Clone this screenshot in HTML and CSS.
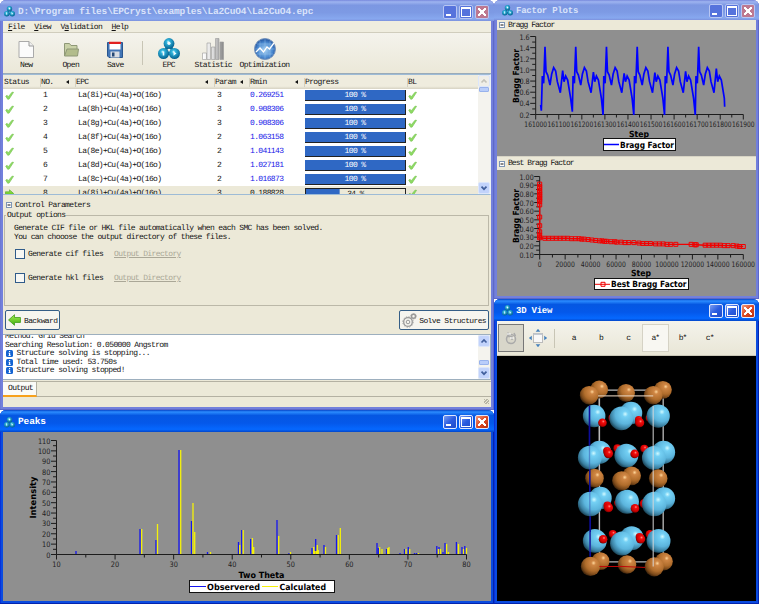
FILE: index.html
```
<!DOCTYPE html>
<html lang="en">
<head>
<meta charset="utf-8">
<title>EPCryst</title>
<link rel="stylesheet" href="styles.css">
</head>
<body>
<svg class="defs" aria-hidden="true">
  <defs>
    <radialGradient id="ball" cx=".42" cy=".35" r=".65"><stop offset="0" stop-color="#d8f8ff"/><stop offset=".25" stop-color="#31b4dc"/><stop offset="1" stop-color="#04618f"/></radialGradient>
    <radialGradient id="gLa" cx=".66" cy=".32" r=".75"><stop offset="0" stop-color="#d2faff"/><stop offset=".16" stop-color="#74d0f4"/><stop offset=".55" stop-color="#5cb5dd"/><stop offset=".8" stop-color="#3b81a2"/><stop offset="1" stop-color="#163b4b"/></radialGradient>
    <radialGradient id="gCu" cx=".66" cy=".32" r=".75"><stop offset="0" stop-color="#ffd69a"/><stop offset=".16" stop-color="#cf8644"/><stop offset=".55" stop-color="#b06d2c"/><stop offset=".8" stop-color="#7b491a"/><stop offset="1" stop-color="#2e1a07"/></radialGradient>
    <radialGradient id="gO" cx=".6" cy=".35" r=".7"><stop offset="0" stop-color="#ff8a80"/><stop offset=".25" stop-color="#f20c0c"/><stop offset=".7" stop-color="#c80000"/><stop offset="1" stop-color="#5a0000"/></radialGradient>
    <radialGradient id="globe" cx=".5" cy=".55" r=".55"><stop offset="0" stop-color="#a8d2f4"/><stop offset=".65" stop-color="#4b8ad0"/><stop offset="1" stop-color="#1d4f9c"/></radialGradient>
    <linearGradient id="metal"><stop offset="0" stop-color="#fff"/><stop offset=".5" stop-color="#ddd"/><stop offset="1" stop-color="#888"/></linearGradient>
    <linearGradient id="green" x2="0" y2="1"><stop offset="0" stop-color="#a5ee52"/><stop offset="1" stop-color="#3fae0c"/></linearGradient>
    <symbol id="epc" viewBox="0 0 22 22"><path d="M11 6 5.500 15.500H16.500Z" stroke="#0b6f98" stroke-width="3" fill="none"/><circle cx="11" cy="5.500" r="5.400" fill="url(#ball)"/><circle cx="5.500" cy="15.500" r="5.500" fill="url(#ball)"/><circle cx="16.500" cy="15.500" r="5.500" fill="url(#ball)"/><circle cx="11" cy="5.300" r="1.600" fill="#effcff"/><path d="M4.700 13.500h1.600v4h-1.600zM15.500 13.300l3 2.200-3 2.200z" fill="#effcff"/></symbol>
    <symbol id="tick" viewBox="0 0 10 10"><path d="M.8 5.800 2.300 4.800 3.700 6.300 7.800 1.300 9.500 1.500 4.600 9 3 9.200Z" fill="#8ddb62" stroke="#74c24c" stroke-width=".7"/></symbol>
    <symbol id="arrow" viewBox="0 0 12 11"><path d="M.5 5.500 6 .6V3.200H11.500V7.800H6V10.400Z" fill="url(#green)" stroke="#3b9815" stroke-width=".7"/></symbol>
    <symbol id="info" viewBox="0 0 7 7"><rect width="7" height="7" rx="1.500" fill="#1464d2"/><path d="M3 1h1.200v1H3zM2.500 2.800h1.700v2.400h.6v.7H2.500v-.7H3V3.500h-.5z" fill="#fff"/></symbol>
    <symbol id="up" viewBox="0 0 10 10"><path d="M2.500 6.500 5 4 7.500 6.500" fill="none" stroke="currentColor" stroke-width="1.700"/></symbol>
    <symbol id="down" viewBox="0 0 10 10"><path d="M2.500 3.700 5 6.200 7.500 3.700" fill="none" stroke="currentColor" stroke-width="1.700"/></symbol>
    <symbol id="minus" viewBox="0 0 6 6"><rect x=".5" y=".5" width="5" height="5" fill="#fff" stroke="#7d95b5"/><path d="M1.500 3h3" stroke="#111"/></symbol>
  </defs>
</svg>
<div class="desktop">
  <div class="left">
    <section class="win main inactive">
      <header class="title"><svg class="logo"><use href="#epc"/></svg><h1>D:\Program files\EPCryst\examples\La2CuO4\La2CuO4.epc</h1><span class="ctl min"></span><span class="ctl max"></span><span class="ctl close"></span></header>
      <div class="body">
        <nav class="menu"><span><u>F</u>ile</span><span><u>V</u>iew</span><span>V<u>a</u>lidation</span><span><u>H</u>elp</span></nav>
        <div class="toolbar">
          <div class="tool"><svg viewBox="0 0 22 22"><path d="M4 3.500H14L18.500 8V19.500H4Z" fill="#fbfbfb" stroke="#aaa"/><path d="M14 3.500V8H18.500" fill="#eee" stroke="#999"/></svg><span>New</span></div>
          <div class="tool"><svg viewBox="0 0 22 22"><path d="M4.500 18V5.500H9.500L11 7.500H17V11" fill="#c9d1a7" stroke="#8f9877"/><path d="M4.500 18 7 11H18.500L17.500 18Z" fill="#b2bc8c" stroke="#8f9877"/></svg><span>Open</span></div>
          <div class="tool"><svg viewBox="0 0 22 22"><path d="M3.500 4.500H18.500V19.500H5L3.500 18Z" fill="#4275b5" stroke="#29568f"/><path d="M5.500 4.500H16.500V11.500H5.500Z" fill="#fff"/><path d="M5 3.700H17V6H5Z" fill="#e22020"/><path d="M6.500 13.500H15.500V19.500H6.500Z" fill="#d8dde3"/><path d="M8 14.500H10.500V18.500H8Z" fill="#244874"/></svg><span>Save</span></div>
          <i class="sep"></i>
          <div class="tool"><svg><use href="#epc"/></svg><span>EPC</span></div>
          <div class="tool"><svg viewBox="0 0 22 22"><g fill="url(#metal)" stroke="#999" stroke-width=".6"><path d="M.5 15h4v6.500H.5zM5 5h3.500v16.500H5zM9.500 9h3.500v12.500H9.500zM13.500.500h3.500v21h-3.500zM18 4h3.500v17.500H18z"/></g></svg><span>Statistic</span></div>
          <div class="tool wide"><svg viewBox="0 0 22 22"><circle cx="11" cy="11" r="10.500" fill="url(#globe)" stroke="#7a97bd"/><path d="M11 1v20M1 11h20M6 2.500v17M16 2.500v17M3 6h16M3 16h16" stroke="#a2caee" stroke-width=".4"/><path d="M2 14 6 10 9.500 14 13 9 15.500 11 20 5" stroke="#fff" stroke-width="1.300" fill="none"/></svg><span>Optimization</span></div>
        </div>
        <div class="list">
          <div class="rows">
            <div class="row head"><span>Status</span><span>NO.<b></b></span><span>EPC<b></b></span><span>Param<b></b></span><span>Rmin<b></b></span><span>Progress</span><span>BL</span></div>
            <div id="rows"></div>
          </div>
          <div class="scroll"><span class="sb off"><svg><use href="#up"/></svg></span><span class="thumb"></span><span class="sb end"><svg><use href="#down"/></svg></span></div>
        </div>
        <div class="section"><svg><use href="#minus"/></svg>Control Parameters</div>
        <fieldset>
          <legend>Output options</legend>
          <p>Generate CIF file or HKL file automatically when each SMC has been solved.<br>You can chooose the output directory of these files.</p>
          <div class="check"><i></i><span>Generate cif files</span><a>Output Directory</a></div>
          <div class="check"><i></i><span>Generate hkl files</span><a>Output Directory</a></div>
        </fieldset>
        <div class="actions">
          <button><svg viewBox="0 0 12 11"><use href="#arrow"/></svg>Backward</button>
          <button><svg class="gear" viewBox="0 0 15 15"><g fill="none" stroke="#999"><circle cx="6" cy="9" r="4.300" stroke-width="1.300"/><circle cx="6" cy="9" r="5.200" stroke-dasharray="1.400 1.300" stroke-width=".9"/><circle cx="6" cy="9" r="1.800"/><circle cx="11.500" cy="3.300" r="2" stroke-width="1.500"/><circle cx="11.500" cy="3.300" r="2.900" stroke-dasharray="1 .8" stroke-width=".7"/></g></svg>Solve Structures</button>
        </div>
        <div class="log">
          <div class="lines"><div>Method: Grid Search</div><div>Searching Resolution: 0.050000 Angstrom</div><div><svg><use href="#info"/></svg>Structure solving is stopping...</div><div><svg><use href="#info"/></svg>Total time used: 53.750s</div><div><svg><use href="#info"/></svg>Structure solving stopped!</div></div>
          <div class="scroll"><span class="sb"><svg><use href="#up"/></svg></span><span class="thumb low"></span><span class="sb"><svg><use href="#down"/></svg></span></div>
        </div>
        <div class="tabs"><span>Output</span></div>
        <div class="status"><i></i></div>
      </div>
    </section>
    <section class="win peaks">
      <header class="title"><svg class="logo"><use href="#epc"/></svg><h1>Peaks</h1><span class="ctl min"></span><span class="ctl max"></span><span class="ctl close"></span></header>
      <div class="body"><svg id="peaks" class="plot" viewBox="3 432 488 169"></svg></div>
    </section>
  </div>
  <div class="right">
    <section class="win factor inactive">
      <header class="title"><svg class="logo"><use href="#epc"/></svg><h1>Factor Plots</h1><span class="ctl min"></span><span class="ctl max"></span><span class="ctl close"></span></header>
      <div class="body">
        <div class="bar"><svg><use href="#minus"/></svg>Bragg Factor</div>
        <svg id="bragg" class="plot" viewBox="497 30 259 126"></svg>
        <div class="bar second"><svg><use href="#minus"/></svg>Best Bragg Factor</div>
        <svg id="best" class="plot" viewBox="497 170 259 126"></svg>
      </div>
    </section>
    <section class="win view">
      <header class="title"><svg class="logo"><use href="#epc"/></svg><h1>3D View</h1><span class="ctl min"></span><span class="ctl max"></span><span class="ctl close"></span></header>
      <div class="body">
        <div class="vbar">
          <span class="pressed"><svg viewBox="0 0 14 14"><g fill="none" stroke="#aaa" stroke-width="1.500"><circle cx="7" cy="8" r="4.500"/><path d="M4 1.500V5.500H8V9M10 2 11.500 5"/></g><path d="M3 3h4M6 7h4" stroke="#fff"/></svg></span>
          <span class="fit"><svg viewBox="0 0 20 20"><rect x="5.500" y="5.500" width="9" height="9" fill="#f8f8f8" stroke="#bbb"/><path d="M5.500 5.500h9v1.500h-9z" fill="#c3cbd4"/><path d="M10 .8 12.300 3.800H7.700ZM10 19.200 7.700 16.200H12.300ZM.8 10 3.800 7.700V12.300ZM19.200 10 16.200 12.300V7.700Z" fill="#4682bd"/></svg></span>
          <i class="sep"></i>
          <span>a</span><span>b</span><span>c</span><span class="hot">a*</span><span>b*</span><span>c*</span>
        </div>
        <svg id="crystal" class="plot" viewBox="497 355 259 246"></svg>
      </div>
    </section>
  </div>
</div>
<script src="app.js"></script>
</body>
</html>
```
FILE: styles.css
```
* { box-sizing: border-box; }
body { margin: 0; background: #fff; color: #111; font: 8px/9px "Liberation Mono", monospace; letter-spacing: -.63px; text-rendering: geometricPrecision; overflow: hidden; white-space: nowrap; }
svg { display: block; flex: none; }
.defs { position: absolute; width: 0; height: 0; }
.desktop { display: grid; grid-template-columns: 494px 265px; width: 759px; height: 604px; }
.left { display: grid; grid-template-rows: 410px 194px; }
.right { display: grid; grid-template-rows: 299px 305px; }
.win { display: flex; flex-direction: column; padding: 0 3px 3px; background: #0a4be0; border-radius: 6px 6px 0 0; box-shadow: inset -1px -1px #0424ad, inset 1px 0 #0831d9; min-height: 0; overflow: hidden; }
.inactive { background: #7280dc; box-shadow: inset -1px -1px #5d68c8, inset 1px 0 #6d79d4; }
.title { display: flex; align-items: center; gap: 3px; flex: none; height: 22px; margin: 0 -3px; padding: 2px 5px 0 4px; background: linear-gradient(#0645c8, #2b8cff 9%, #0557e2 25%, #0458ea 60%, #0568ff 88%, #0346c9); color: #fff; }
.inactive .title { height: 21px; background: linear-gradient(#7788dc, #9eb4f0 9%, #7c97e2 25%, #7d9ae4 60%, #87a8ef 90%, #7c91dd); color: #d9e3fa; }
.title h1 { flex: 1; margin: 0; font-size: 9.500px; line-height: 12px; letter-spacing: -.13px; font-weight: bold; }
.logo { width: 11px; height: 11px; }
.ctl { width: 14px; height: 14px; border: 1px solid #dfe8ff; border-radius: 2px; background: linear-gradient(135deg, #7b9cf0, #2a5ce0 50%, #1f4bc8); display: grid; margin-left: -1px; }
.ctl.min::after { content: ""; width: 5px; height: 2px; background: #fff; align-self: end; margin: 0 0 2px 2px; }
.ctl.max::after { content: ""; width: 8px; height: 7px; border: 1px solid #fff; border-top-width: 2px; place-self: center; }
.ctl.close { background: linear-gradient(135deg, #f09a7b, #dc4a25 50%, #b93010); }
.ctl.close::after { content: ""; width: 8px; height: 8px; place-self: center; background: linear-gradient(45deg, transparent 43%, #fff 43% 57%, transparent 57%), linear-gradient(-45deg, transparent 43%, #fff 43% 57%, transparent 57%); }
.inactive .ctl { border-color: #b8c6f3; background: #5673dc; }
.inactive .ctl.close { background: #bd7890; }
.body { flex: 1; display: flex; flex-direction: column; background: #ece9d8; min-height: 0; }
.plot { width: 100%; flex: 1; min-height: 0; background: #8f8f8f; letter-spacing: 0; }
.menu { display: flex; gap: 9.500px; height: 12px; padding: 2px 5px 0; border-bottom: 1px solid #d0cdbd; background: #efeddf; }
.toolbar { display: flex; height: 41px; padding: 5px 0 0 1px; background: linear-gradient(#f4f3ec, #ebe8d8); border-bottom: 1px solid #9aabb9; }
.tool { width: 44.500px; display: flex; flex-direction: column; align-items: center; gap: 1px; }
.tool svg { width: 22px; height: 22px; }
.tool.wide { width: 58px; }
.sep { width: 1px; height: 24px; margin: 3px 4px; background: #c8c5b5; }
.list { display: flex; height: 121px; background: #fff; border: 1px solid #9dbbd6; border-left: 0; border-right-color: #e8f0f5; }
.rows { flex: 1; overflow: hidden; }
.row { display: grid; grid-template-columns: 36px 35px 139px 35px 55px 103px 1fr; align-items: center; height: 13.900px; padding-left: 2px; }
.row.head { height: 14px; background: linear-gradient(#efecde 80%, #d6d2c2); padding: 0 0 0 1px; }
.head span { position: relative; border-left: 1px solid #d2cfc0; }
.head span:first-child { border: 0; }
.head b { position: absolute; right: 6px; top: 2px; border: 2.500px solid transparent; border-right: 3px solid #111; border-left: 0; }
.row > .t { width: 9px; height: 9px; }
.row .r { color: #1616e8; }
.row .k { padding-left: 2px; }
.row.now { background: #ece9d8; }
.row.now .r { color: #111; }
.progress { width: 101px; height: 11px; border: 1px solid #222; border-width: 0 1px 1px 0; background: linear-gradient(#2f68c4 0 0) no-repeat #ece9d8; color: #fff; text-align: center; line-height: 11px; font-size: 8px; }
.now .progress { color: #111; border-width: 1px; }
.scroll { width: 12px; display: flex; flex-direction: column; background: #f4f3ee; }
.sb { width: 12px; height: 12px; border: 1px solid #dce6fb; border-radius: 2px; background: #c2d3fb; color: #415f9c; }
.sb svg { width: 10px; height: 10px; }
.sb.off { background: #efeee8; color: #c4c3ba; }
.end { margin-top: auto; }
.thumb { width: 10px; height: 5px; margin: 0 1px; background: #b9cdfa; border: 1px solid #98b2ec; border-radius: 1px; }
.thumb.low { margin-top: auto; margin-bottom: 2px; }
.section, .bar { display: flex; align-items: center; gap: 3px; }
.section { height: 15px; padding: 5px 0 0 3px; }
.section svg, .bar svg { width: 6px; height: 6px; }
fieldset { height: 95px; margin: 1px 2px 0 1px; padding: 0 0 0 8px; border: 1px solid #bbb8a8; min-width: 0; }
legend { margin-left: -7px; padding: 0 1px; }
fieldset p { margin: 5px 0 7px 1px; line-height: 8.700px; }
.check { display: flex; align-items: center; height: 10px; margin: 0 0 14px 2px; }
.check i { width: 10px; height: 10px; background: #f7f7f3; border: 1px solid #2f5b8a; margin-right: 3px; }
.check span { width: 86px; }
.check a { color: #aaa797; text-decoration: underline; }
.actions { display: flex; justify-content: space-between; height: 28px; padding: 4px 2px 4px 2px; }
button { display: flex; align-items: center; gap: 3px; height: 20px; padding: 0 2px; background: #f6f5ef; border: 1px solid #355e86; border-radius: 2px; font: inherit; letter-spacing: inherit; color: #111; }
button svg { width: 13px; height: 12px; }
button .gear { width: 15px; height: 15px; margin-right: -1px; }
.log { display: flex; height: 46px; background: #fff; border: 1px solid #9dafbe; border-left: 0; }
.lines { flex: 1; overflow: hidden; line-height: 8.500px; padding-left: 2px; }
.lines div { display: flex; gap: 3.500px; height: 8.500px; }
.lines div:first-child { margin-top: -2px; }
.lines svg { width: 7px; height: 7px; margin-left: 1px; }
.tabs { height: 16px; border: 1px solid #b4b1a2; border-left: 0; border-width: 1px 0; margin-top: 1px; }
.tabs span { display: block; width: 34px; height: 15px; padding: 2px 0 0 5px; background: #fbfbf8; border-right: 1px solid #b4b1a2; border-bottom: 2px solid #f7a11c; }
.status { flex: 1; display: flex; justify-content: flex-end; align-items: flex-end; padding: 0 2px 3px; }
.status i { width: 5px; height: 5px; background: repeating-linear-gradient(135deg, #b8b5a5 0 1px, transparent 1px 2px); }
.right { letter-spacing: -.94px; }
.right h1 { font-size: 9px; letter-spacing: -.23px; }
.right .title { padding-left: 8px; padding-right: 4px; padding-top: 1px; }
.right .inactive .title { height: 20px; }
.bar { height: 10px; padding-left: 2px; flex: none; }
.bar.second { height: 14px; border-top: 1px solid #d7d4c5; }
.vbar { display: flex; align-items: center; flex: none; height: 35px; padding: 1px 1px; background: linear-gradient(#f4f3ec, #e9e6d6); border-bottom: 1px solid #c9c6b6; }
.vbar span { width: 27.200px; height: 28px; display: grid; place-items: center; }
.vbar .pressed { width: 26px; border: 1px solid #777; background: #d8d6ca; }
.vbar .pressed svg { width: 14px; height: 14px; }
.vbar .fit svg { width: 20px; height: 20px; }
.vbar .sep { height: 19px; margin: 0 5px 0 3px; }
.vbar .hot { background: #f8f7f2; border: 1px solid #d5d2c5; }
#crystal { background: #000; }
.lab { font: 7.500px "DejaVu Sans", sans-serif; fill: #222; }
.big { font: bold 8.500px "DejaVu Sans", sans-serif; fill: #000; }
.axis { stroke: #1c1c1c; stroke-width: 1; fill: none; }
.legend { fill: #fff; stroke: #111; }
.blue { stroke: #0000ff; fill: none; stroke-width: 1.700; }
.obs { stroke: #1515ee; stroke-width: 1.300; fill: none; }
.calc { stroke: #f5f20a; stroke-width: 1.300; fill: none; }
.thin { stroke-width: 1; }
.red { stroke: #f00000; fill: none; stroke-width: 1; }
.thick { stroke-width: 1.400; }
```
FILE: app.js
```
const $ = id => document.getElementById(id);

// Solution table
const data = [['i', 3, '0.269251'], ['h', 3, '0.908306'], ['g', 3, '0.908306'], ['f', 2, '1.063158'],
  ['e', 2, '1.041143'], ['d', 2, '1.027181'], ['c', 2, '1.016873'], ['i', 3, '0.188828']];
$('rows').innerHTML = data.map(([s, p, r], i) => {
  const now = i === 7, pct = now ? 34 : 100;
  return `<div class="row${now ? ' now' : ''}"><svg class="t"><use href="#${now ? 'arrow' : 'tick'}"${now ? ' transform="matrix(-1 0 0 1 9 0)"' : ''}/></svg>` +
    `<span class="k">${i + 1}</span><span class="k">La(8${s})+Cu(4a)+O(16${now ? 'n' : 'o'})</span><span class="k">${p}</span><span class="r">${r}</span>` +
    `<span class="progress" style="background-size:${pct}% 100%">${pct} %</span><svg class="t"><use href="#tick"/></svg></div>`;
}).join('');

// Chart helpers
const text = (x, y, s, w, cls = 'lab', anchor = 'middle', extra = '') =>
  `<text class="${cls}" x="${x}" y="${y}" text-anchor="${anchor}" textLength="${w}" lengthAdjust="spacingAndGlyphs" ${extra}>${s}</text>`;
const path = (cls, d) => `<path class="${cls}" d="${d}"/>`;
const upright = (x, y, s, w) => text(x, y, s, w, 'big', 'middle', `transform="rotate(-90 ${x} ${y})"`);
function axes(x0, x1, y0, y1, xs, ys, xw, yw) {
  let d = `M${x0} ${y1}V${y0}H${x1}`, out = '';
  const nx = xs.length - 1, ny = ys.length - 1;
  for (let i = 0; i <= nx * 2; i++) d += `M${x0 + (x1 - x0) * i / nx / 2} ${y0}v${i % 2 ? 3 : 5}`;
  for (let i = 0; i <= ny * 2; i++) d += `M${x0} ${y0 + (y1 - y0) * i / ny / 2}h${i % 2 ? -3.5 : -5.5}`;
  xs.forEach((s, i) => out += text(x0 + (x1 - x0) * i / nx, y0 + 12.3, s, String(s).length * xw));
  ys.forEach((s, i) => out += text(x0 - 6, y0 + (y1 - y0) * i / ny + 3, s, String(s).replace('.', '').length * yw + (String(s).includes('.') ? 2.2 : 0), 'lab', 'end'));
  return path('axis', d) + out;
}

// Bragg factor
{
  const cycle = [[-8, 228], [-4, 250], [0, 140], [3, 215], [8, 225], [15, 255], [20, 222], [26, 203], [32, 213], [37, 245], [46, 278], [53, 212], [57, 245], [62, 228], [68, 240], [77, 295], [82, 335]];
  const pts = [[152, 315], [154, 332]];
  for (let n = 0; n < 6; n++) for (const [dx, y] of cycle) {
    if (n === 5 && dx > 77) break;
    pts.push([165 + n * 92.2 + dx, y === 335 && n ? 345 : y === 212 ? [212, 216, 220, 218, 214, 206][n] : y]);
  }
  pts.push([704, 320]);
  const at = pts.map(([x, y]) => `${490 + x / 3} ${y / 3}`);
  $('bragg').innerHTML = axes(535.7, 743.3, 114.5, 36.5, [0, 1, 2, 3, 4, 5, 6, 7, 8, 9].map(n => '161' + n + '00'), ['0.2', '0.4', '0.6', '0.8', '1.0', '1.2', '1.4', '1.6'], 3.78, 4) +
    path('blue', 'M' + at.join('L')) + upright(518.5, 76, 'Bragg Factor', 54) + text(639, 136.5, 'Step', 20, 'big') +
    '<rect class="legend" x="603.5" y="138.5" width="72" height="12"/>' + path('blue', 'M604 144.500H619') + text(620, 147.5, 'Bragg Factor', 54, 'big', 'start');
}

// Best Bragg factor
{
  const X = v => 539.7 + v * 203.6 / 160, Y = v => 254.3 - (v - .1) * 78 / .9;
  const drop = [.91, .88, .86, .83, .81, .79, .77, .75, .73, .71, .67, .53, .43, .36, .32, .3];
  const tail = [[0, .29], [4, .285], [7, .285], [10, .285], [13, .285], [16, .285], [19, .285], [22, .285], [25, .28], [28, .28], [31, .28], [33, .275], [35, .275], [38, .27], [41, .265], [44, .26], [47, .255], [49, .255], [51, .25], [52.500, .25], [56, .245], [59, .245], [60.500, .24], [64, .24], [67, .235], [70, .235], [74, .235], [78, .23], [81, .225], [84, .225], [87, .225], [91, .22], [94, .22], [97, .22], [100, .215], [103, .215], [107, .215], [119, .215], [122, .21], [123, .21], [130, .205], [133, .205], [136, .205], [139, .205], [142, .205], [145, .2], [148, .2], [152, .2], [155, .195], [157, .19], [160, .19]];
  const all = drop.map(v => [0, v]).concat(tail);
  $('best').innerHTML = axes(539.7, 743.3, 254.5, 176.5, [0, 20000, 40000, 60000, 80000, 100000, 120000, 140000, 160000], ['0.10', '0.20', '0.30', '0.40', '0.50', '0.60', '0.70', '0.80', '0.90', '1.00'], 3.9, 4) +
    path('red thick', 'M' + all.map(([x, y]) => X(x) + ' ' + Y(y)).join('L')) +
    path('red', all.map(([x, y]) => `M${X(x) - 2} ${Y(y) - 2}h4v4h-4z`).join('')) +
    upright(518.5, 216, 'Bragg Factor', 54) + text(641, 276, 'Step', 20, 'big') +
    '<rect class="legend" x="594.5" y="278.500" width="94" height="11"/>' + path('red', 'M595 284.300H610M601 282.300h4v4h-4z') + text(611, 287.3, 'Best Bragg Factor', 75.5, 'big', 'start');
}

// Diffraction peaks: [x, height] in plot pixels
{
  const obs = [[76, 3], [140, 25], [156, 14], [179, 104], [191.5, 33], [207.5, 2], [238.5, 12], [241.7, 24], [250.7, 15], [277, 34], [289, 1], [312, 6], [315.7, 15], [324, 9], [336.5, 19], [377, 11], [378.5, 6], [386.500, 5], [400, 1], [404.5, 5], [408.3, 7], [414.500, 1], [416.5, 1], [436.8, 8], [439, 7], [443, 2], [445, 11], [456.4, 12], [462, 7], [464.8, 8]];
  const calc = [[141.7, 25], [157.5, 30], [180.7, 104], [193, 51], [194.7, 22], [210.5, 2], [239.7, 9], [243.2, 24], [252.4, 16], [253.7, 7], [278.7, 18], [290.5, 2], [313.7, 7], [315, 3], [316.5, 3], [317.3, 9], [318.3, 4], [325.5, 7], [338.3, 19], [340.3, 26], [379.7, 7], [382, 5], [387.8, 6], [389, 7], [406, 5], [409.7, 5], [418.500, 1], [438.5, 5], [440.5, 5], [446.600, 10], [448.5, 2], [458.5, 10], [463.5, 5], [466.5, 6]];
  const bars = a => a.map(([x, h]) => `M${x} 554v${-h}`).join('');
  $('peaks').innerHTML = axes(56.5, 466.5, 554.5, 440.5, [10, 20, 30, 40, 50, 60, 70, 80], [0, 10, 20, 30, 40, 50, 60, 70, 80, 90, 100, 110], 4.2, 4.2) +
    path('obs', bars(obs)) + path('calc', bars(calc)) + upright(36, 497.500, 'Intensity', 42) + text(261.5, 577.5, 'Two Theta', 46, 'big') +
    '<rect class="legend" x="189.500" y="580.500" width="145" height="12"/>' + path('obs thin', 'M190 586.500H206') + path('calc thin', 'M262 586.500H278') +
    text(207, 589.5, 'Observered', 53, 'big', 'start') + text(279.5, 589.5, 'Calculated', 46.5, 'big', 'start');
}

// Unit cell: atoms listed back to front as [element, x, y, r]
{
  const r = { La: 'gLa', Cu: 'gCu', O: 'gO' };
  const back = [['Cu', 117, 71, 27], ['Cu', 309, 72, 27], ['Cu', 198, 81, 27], ['O', 157, 157, 12], ['O', 268, 157, 11], ['La', 213, 142, 34],
    ['La', 118, 260, 35], ['La', 311, 260, 35], ['O', 172, 248, 12], ['O', 253, 249, 12], ['La', 199, 270, 36], ['Cu', 215, 331, 28],
    ['La', 121, 398, 34], ['La', 312, 399, 34], ['O', 173, 413, 11], ['O', 253, 415, 14], ['La', 201, 409, 36],
    ['O', 158, 506, 12], ['O', 270, 507, 13], ['La', 215, 519, 36], ['Cu', 121, 588, 27], ['Cu', 312, 589, 27], ['Cu', 201, 598, 28]];
  const front = [['La', 102, 151, 34], ['La', 295, 151, 35], ['La', 184, 158, 36], ['Cu', 87, 88, 28], ['Cu', 280, 88, 28], ['O', 236, 162, 11], ['O', 239, 171, 14], ['O', 127, 171, 13],
    ['La', 89, 276, 36], ['La', 282, 277, 36], ['O', 141, 256, 12], ['O', 145, 264, 14], ['O', 224, 265, 13],
    ['Cu', 103, 338, 28], ['Cu', 295, 339, 28], ['Cu', 185, 346, 29],
    ['La', 90, 416, 37], ['La', 283, 416, 37], ['O', 142, 420, 12], ['O', 145, 427, 14], ['O', 225, 429, 13],
    ['La', 104, 527, 36], ['La', 296, 527, 36], ['La', 186, 535, 36], ['O', 129, 522, 13], ['O', 239, 515, 12], ['O', 242, 521, 14],
    ['Cu', 91, 604, 29], ['Cu', 283, 605, 29]];
  const draw = a => a.map(([e, x, y, q]) => `<circle cx="${x}" cy="${y}" r="${q}" fill="url(#${r[e]})"/>`).join('');
  const line = (d, c, w = 3, o = 1) => `<path d="${d}" stroke="${c}" stroke-width="${w}" opacity="${o}" fill="none"/>`;
  $('crystal').innerHTML = `<g transform="translate(560 365) scale(.33333)">` +
    line('M117 73H310V590H118ZM118 590V73', '#b9b9b9', 4) + draw(back) + draw(front) +
    line('M88 120V240M89 312V380M90 453V575', '#0d0d99', 5) + line('M88 240V312M89 380V453M90 500V560', '#3a5fb5', 4, .6) +
    line('M280 120V604', '#d7d7d7', 4, .75) + line('M114 90H280', '#e8d3c0', 4, .85) +
    line('M118 604H186L256 607', '#c00808', 3) + '</g>';
}
```
